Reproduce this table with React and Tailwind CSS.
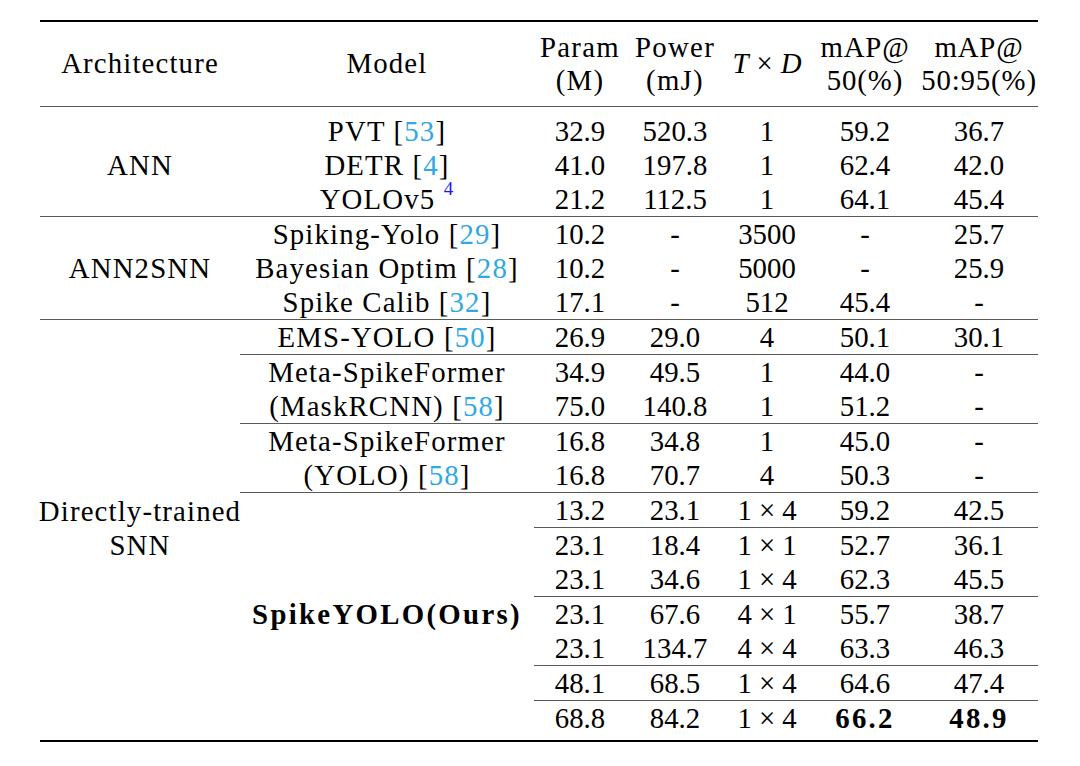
import React from "react";

const cite = "text-[#30a8e4]";

function Ref({ n }) {
  return (
    <span>
      {" "}[<span className={cite}>{n}</span>]
    </span>
  );
}

function Cell({ children, rule, bold, span, h = true, className = "" }) {
  return (
    <div
      className={[
        "flex flex-col items-center justify-center leading-[34px] whitespace-nowrap",
        rule ? "border-t border-[#5a5a5a]" : "",
        h ? (rule ? "h-[35px]" : "h-[34px]") : "",
        span || "",
        bold ? "font-bold" : "",
        className,
      ].join(" ")}
    >
      {children}
    </div>
  );
}

function Nums({ vals, rule, boldFrom }) {
  return vals.map((v, i) => {
    const b = boldFrom !== undefined && i >= boldFrom;
    return (
      <Cell key={i} rule={rule} bold={b} className={b ? "tracking-[0.08em]" : ""}>
        {v}
      </Cell>
    );
  });
}

function Times({ a, b }) {
  return (
    <span>
      {a}
      <span className="mx-[7px]">×</span>
      {b}
    </span>
  );
}

export default function App() {
  return (
    <div className="min-h-[766px] w-[1080px] bg-white pt-[20px] text-black font-[family-name:Liberation_Serif,DejaVu_Serif,serif] text-[28.8px]">
      <div className="ml-[40px] w-[998px] border-t-2 border-b-2 border-black pb-[5px]">
        <div className="grid grid-cols-[200px_294px_92px_98px_86px_110px_118px]">
          {/* header */}
          <div className="h-[85px] border-b border-[#5a5a5a] flex items-center justify-center tracking-[0.04em]">Architecture</div>
          <div className="h-[85px] border-b border-[#5a5a5a] flex items-center justify-center tracking-[0.04em]">Model</div>
          <div className="h-[85px] border-b border-[#5a5a5a] flex flex-col items-center justify-center leading-[33px] tracking-[0.045em]">
            <span>Param</span>
            <span>(M)</span>
          </div>
          <div className="h-[85px] border-b border-[#5a5a5a] flex flex-col items-center justify-center leading-[33px] tracking-[0.045em]">
            <span>Power</span>
            <span>(mJ)</span>
          </div>
          <div className="h-[85px] border-b border-[#5a5a5a] flex items-center justify-center whitespace-nowrap">
            <span>
              <i>T</i>
              <span className="mx-[8px]">×</span>
              <i>D</i>
            </span>
          </div>
          <div className="h-[85px] border-b border-[#5a5a5a] flex flex-col items-center justify-center leading-[33px] tracking-[0.03em]">
            <span>mAP@</span>
            <span>50(%)</span>
          </div>
          <div className="h-[85px] border-b border-[#5a5a5a] flex flex-col items-center justify-center leading-[33px] tracking-[0.03em]">
            <span>mAP@</span>
            <span>50:95(%)</span>
          </div>
          <div className="col-span-7 h-[7px]" />

          {/* ANN */}
          <Cell span="row-span-3" h={false} className="tracking-[0.04em]">ANN</Cell>
          <Cell className="tracking-[0.04em]">
            <span>PVT<Ref n="53" /></span>
          </Cell>
          <Nums vals={["32.9", "520.3", "1", "59.2", "36.7"]} />
          <Cell className="tracking-[0.04em]">
            <span>DETR<Ref n="4" /></span>
          </Cell>
          <Nums vals={["41.0", "197.8", "1", "62.4", "42.0"]} />
          <Cell className="tracking-[0.04em]">
            <span>
              YOLOv5{" "}
              <sup className="text-[19px] text-[#1a1aee] top-[-14px]">4</sup>
            </span>
          </Cell>
          <Nums vals={["21.2", "112.5", "1", "64.1", "45.4"]} />

          {/* ANN2SNN */}
          <Cell span="row-span-3" rule h={false} className="tracking-[0.04em]">ANN2SNN</Cell>
          <Cell rule className="tracking-[0.04em]">
            <span>Spiking-Yolo<Ref n="29" /></span>
          </Cell>
          <Nums rule vals={["10.2", "-", "3500", "-", "25.7"]} />
          <Cell className="tracking-[0.04em]">
            <span>Bayesian Optim<Ref n="28" /></span>
          </Cell>
          <Nums vals={["10.2", "-", "5000", "-", "25.9"]} />
          <Cell className="tracking-[0.04em]">
            <span>Spike Calib<Ref n="32" /></span>
          </Cell>
          <Nums vals={["17.1", "-", "512", "45.4", "-"]} />

          {/* Directly-trained SNN */}
          <Cell span="row-span-12" rule h={false} className="tracking-[0.04em]">
            <span>Directly-trained</span>
            <span>SNN</span>
          </Cell>
          <Cell rule className="tracking-[0.04em]">
            <span>EMS-YOLO<Ref n="50" /></span>
          </Cell>
          <Nums rule vals={["26.9", "29.0", "4", "50.1", "30.1"]} />

          <Cell span="row-span-2" rule h={false} className="tracking-[0.04em]">
            <span>Meta-SpikeFormer</span>
            <span>(MaskRCNN)<Ref n="58" /></span>
          </Cell>
          <Nums rule vals={["34.9", "49.5", "1", "44.0", "-"]} />
          <Nums vals={["75.0", "140.8", "1", "51.2", "-"]} />

          <Cell span="row-span-2" rule h={false} className="tracking-[0.04em]">
            <span>Meta-SpikeFormer</span>
            <span>(YOLO)<Ref n="58" /></span>
          </Cell>
          <Nums rule vals={["16.8", "34.8", "1", "45.0", "-"]} />
          <Nums vals={["16.8", "70.7", "4", "50.3", "-"]} />

          <Cell span="row-span-7" rule bold h={false} className="tracking-[0.08em]">
            SpikeYOLO(Ours)
          </Cell>
          <Nums rule vals={["13.2", "23.1", <Times a="1" b="4" />, "59.2", "42.5"]} />
          <Nums rule vals={["23.1", "18.4", <Times a="1" b="1" />, "52.7", "36.1"]} />
          <Nums vals={["23.1", "34.6", <Times a="1" b="4" />, "62.3", "45.5"]} />
          <Nums rule vals={["23.1", "67.6", <Times a="4" b="1" />, "55.7", "38.7"]} />
          <Nums vals={["23.1", "134.7", <Times a="4" b="4" />, "63.3", "46.3"]} />
          <Nums rule vals={["48.1", "68.5", <Times a="1" b="4" />, "64.6", "47.4"]} />
          <Nums rule boldFrom={3} vals={["68.8", "84.2", <Times a="1" b="4" />, "66.2", "48.9"]} />
        </div>
      </div>
    </div>
  );
}
